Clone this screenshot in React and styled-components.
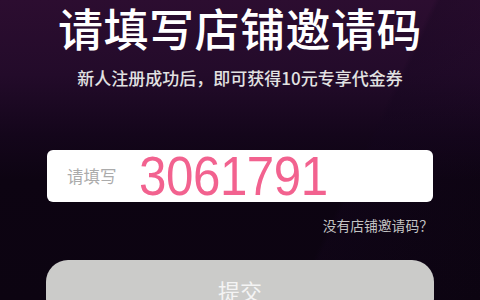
import React from 'react';
import styled, { createGlobalStyle } from 'styled-components';

const GlobalStyle = createGlobalStyle`
  html, body {
    margin: 0;
    padding: 0;
    background: #0d0412;
  }
  #root {
    width: 480px;
    height: 300px;
    overflow: hidden;
  }
`;

const Page = styled.div`
  width: 480px;
  height: 300px;
  box-sizing: border-box;
  overflow: hidden;
  display: flex;
  flex-direction: column;
  align-items: center;
  font-family: "Noto Sans CJK SC", "Noto Sans", sans-serif;
  background:
    linear-gradient(115deg, rgba(0, 0, 0, 0) 70%, rgba(20, 6, 30, 0.35) 71%, rgba(20, 6, 30, 0) 100%),
    linear-gradient(180deg, #2c0d30 0%, #230b2a 25%, #14061b 45%, #0d0412 60%, #0c0411 100%);

  & > * {
    flex-shrink: 0;
  }
`;

const Title = styled.h1`
  margin: 0;
  font-size: 45px;
  line-height: 56px;
  font-weight: 500;
  color: #ffffff;
  letter-spacing: 0.5px;
`;

const Subtitle = styled.p`
  margin: 12px 0 0;
  font-size: 17px;
  line-height: 20px;
  font-weight: 500;
  color: #e2e2e2;
`;

const Field = styled.div`
  margin-top: 62px;
  width: 386px;
  height: 52px;
  box-sizing: border-box;
  background: #ffffff;
  border-radius: 6px;
  display: flex;
  align-items: center;
  padding-left: 20px;
  overflow: hidden;
`;

const Placeholder = styled.span`
  font-size: 16.5px;
  color: #ababab;
  margin-right: 22px;
`;

const Code = styled.span`
  display: inline-block;
  font-family: "Liberation Sans", Arial, sans-serif;
  font-size: 56px;
  line-height: 52px;
  color: #f2628f;
  transform: scaleX(0.88);
  transform-origin: left center;
  letter-spacing: -0.5px;
`;

const HelpRow = styled.div`
  width: 386px;
  margin-top: 14px;
  display: flex;
  justify-content: flex-end;
`;

const HelpLink = styled.a`
  font-size: 13.8px;
  line-height: 18px;
  color: #c4c4c4;
  text-decoration: none;
`;

const Submit = styled.button`
  margin-top: 26px;
  width: 388px;
  height: 60px;
  border: none;
  border-radius: 22px;
  background: #cbcbc9;
  color: #f4f4f4;
  font-family: "Noto Sans CJK SC", sans-serif;
  font-size: 22px;
  display: flex;
  align-items: center;
  justify-content: center;
`;

const App = () => {
  return (
    <>
      <GlobalStyle />
      <Page>
        <Title>请填写店铺邀请码</Title>
        <Subtitle>新人注册成功后，即可获得10元专享代金券</Subtitle>
        <Field>
          <Placeholder>请填写</Placeholder>
          <Code>3061791</Code>
        </Field>
        <HelpRow>
          <HelpLink href="#">没有店铺邀请码？</HelpLink>
        </HelpRow>
        <Submit>提交</Submit>
      </Page>
    </>
  );
};

export default App;
